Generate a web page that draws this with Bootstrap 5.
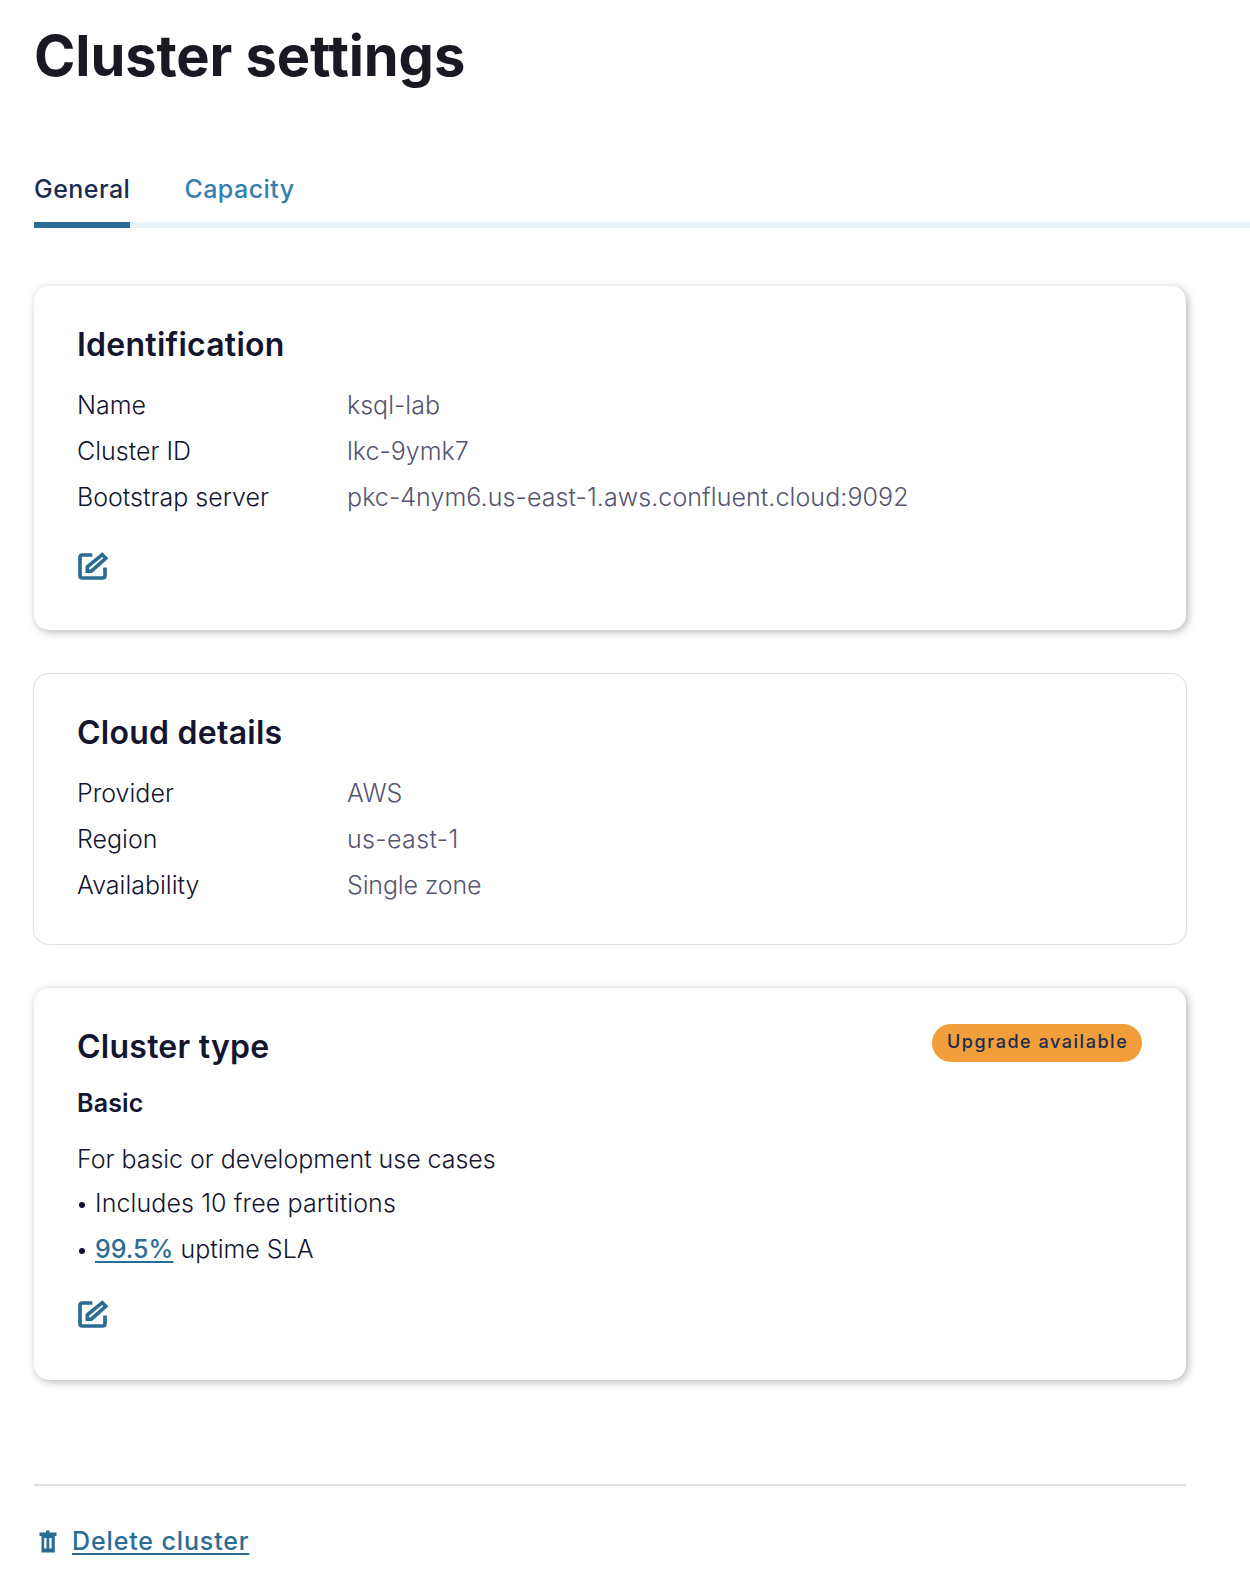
<!DOCTYPE html>
<html lang="en">
<head>
<meta charset="utf-8">
<meta name="viewport" content="width=device-width, initial-scale=1">
<title>Cluster settings</title>
<link rel="stylesheet" href="https://cdn.jsdelivr.net/npm/bootstrap@5.3.0/dist/css/bootstrap.min.css">
<style>
  body { font-family: Inter, "Liberation Sans", sans-serif; font-size: 25px; font-weight: 300; line-height: 46px; color: #14152f; background: #fff; }
  .page { padding: 24px 0 0 34px; }
  .page-title { font-size: 56px; font-weight: 700; line-height: 64px; color: #191823; letter-spacing: -.1px; margin: 0; }
  .settings-tabs { margin-top: 78px; height: 62px; gap: 54px; box-shadow: inset 0 -6px #e7f2f9; }
  .settings-tabs .nav-link { padding: 0; font-weight: 500; line-height: 47px; letter-spacing: .46px; color: #347fae; height: 62px; }
  .settings-tabs .nav-link.active { color: #1c2b50; box-shadow: inset 0 -6px #2b6c94; }
  .panels { width: 1152px; padding-top: 58px; gap: 44px; }
  .panel { --bs-card-border-width: 0; --bs-card-border-radius: 15px; border-radius: 15px; color: inherit; padding: 39px 44px 0 43px; }
  .panel-raised { box-shadow: 2px 2px 9px rgba(0,0,0,.29); }
  .panel-flat { box-shadow: 0 0 1px 1px #dcdce5; }
  .panel-id { height: 344px; }
  .panel-cloud { height: 270px; }
  .panel-type { height: 392px; }
  .panel h2 { font-size: 32px; font-weight: 600; line-height: 40px; letter-spacing: .25px; margin: 0; }
  .facts { display: grid; grid-template-columns: 270px 1fr; margin: 17px 0 0; }
  .facts dt { font-weight: 300; }
  .facts dd { margin: 0; color: #56546f; }
  .fact-host { letter-spacing: .075px; }
  .fact-region { letter-spacing: .35px; }
  .fact-zone { letter-spacing: -.15px; }
  .edit-btn { line-height: 0; width: 31px; height: 30px; margin-top: 31px; }
  .panel-type .edit-btn { margin-top: 27px; }
  .upgrade { width: 210px; height: 38px; margin-top: -3px; margin-bottom: 5px; border-radius: 19px; background: #f29f3b; color: #1c2b50; font-size: 18px; font-weight: 500; line-height: 35px; letter-spacing: 1.54px; padding: 0 0 0 15px; }
  .tier { font-size: 25px; font-weight: 600; line-height: 30px; letter-spacing: .15px; margin: 21px 0 0; }
  .tier-about { margin: 18px 0 0; line-height: 46px; letter-spacing: -.03px; }
  .perks { margin-top: -2px; }
  .perks li { display: flex; align-items: center; }
  .perks li::before { content: ""; width: 6px; height: 6px; border-radius: 50%; background: #14152f; margin: 3px 10px 0 2px; }
  .perk-partitions { letter-spacing: .1px; }
  .ui-link { color: #2b6c94; font-weight: 500; text-decoration-thickness: 2px; text-underline-offset: 3px; }
  .rule { width: 1152px; height: 2px; background: #e0e0e6; margin-top: 104px; }
  .delete-row { margin-top: 32px; padding-left: 5px; gap: 15px; color: #2b6c94; }
  .delete-row .ui-link { letter-spacing: .87px; }
</style>
<script src="https://cdn.jsdelivr.net/npm/bootstrap@5.3.0/dist/js/bootstrap.bundle.min.js"></script>
</head>
<body>
<svg class="d-none">
  <symbol id="edit" viewBox="0 0 31 30">
    <path d="M15.300 4H5.500Q3 4 3 6.500V24.500Q3 27 5.500 27H25.500Q28 27 28 24.500V16.500" fill="none" stroke="currentColor" stroke-width="3.700"/>
    <path d="M10.300 20.200V15.800L25.300 3.600L28.800 7.300L14.300 20.200Z" fill="none" stroke="currentColor" stroke-width="3.600"/>
  </symbol>
</svg>
<main class="page">
  <h1 class="page-title">Cluster settings</h1>
  <nav class="nav settings-tabs flex-nowrap">
    <a class="nav-link active" href="#">General</a>
    <a class="nav-link" href="#">Capacity</a>
  </nav>
  <div class="panels d-flex flex-column">
    <section class="card panel panel-raised panel-id">
      <h2>Identification</h2>
      <dl class="facts">
        <dt>Name</dt><dd>ksql-lab</dd>
        <dt>Cluster ID</dt><dd>lkc-9ymk7</dd>
        <dt>Bootstrap server</dt><dd class="fact-host">pkc-4nym6.us-east-1.aws.confluent.cloud:9092</dd>
      </dl>
      <a class="edit-btn ui-link" href="#" aria-label="Edit"><svg width="31" height="30"><use href="#edit"/></svg></a>
    </section>
    <section class="card panel panel-flat panel-cloud">
      <h2>Cloud details</h2>
      <dl class="facts">
        <dt>Provider</dt><dd>AWS</dd>
        <dt>Region</dt><dd class="fact-region">us-east-1</dd>
        <dt>Availability</dt><dd class="fact-zone">Single zone</dd>
      </dl>
    </section>
    <section class="card panel panel-raised panel-type">
      <div class="d-flex justify-content-between align-items-start">
        <h2>Cluster type</h2>
        <span class="upgrade text-nowrap">Upgrade available</span>
      </div>
      <h3 class="tier">Basic</h3>
      <p class="tier-about">For basic or development use cases</p>
      <ul class="perks list-unstyled mb-0">
        <li><span class="perk-partitions">Includes 10 free partitions</span></li>
        <li><span><a class="ui-link" href="#">99.5%</a> uptime SLA</span></li>
      </ul>
      <a class="edit-btn ui-link" href="#" aria-label="Edit"><svg width="31" height="30"><use href="#edit"/></svg></a>
    </section>
  </div>
  <div class="rule"></div>
  <div class="delete-row d-flex align-items-center">
    <svg width="18" height="23" viewBox="0 0 18 23" fill="currentColor"><path fill-rule="evenodd" d="M.5 2.500H7V.5H10.500V2.500H17.500V6H15.800V22.500H2.500V6H.5ZM5.200 8V18.500H7.500V8ZM10.300 8V18.500H12.600V8Z"/></svg>
    <a class="ui-link" href="#">Delete cluster</a>
  </div>
</main>
</body>
</html>
